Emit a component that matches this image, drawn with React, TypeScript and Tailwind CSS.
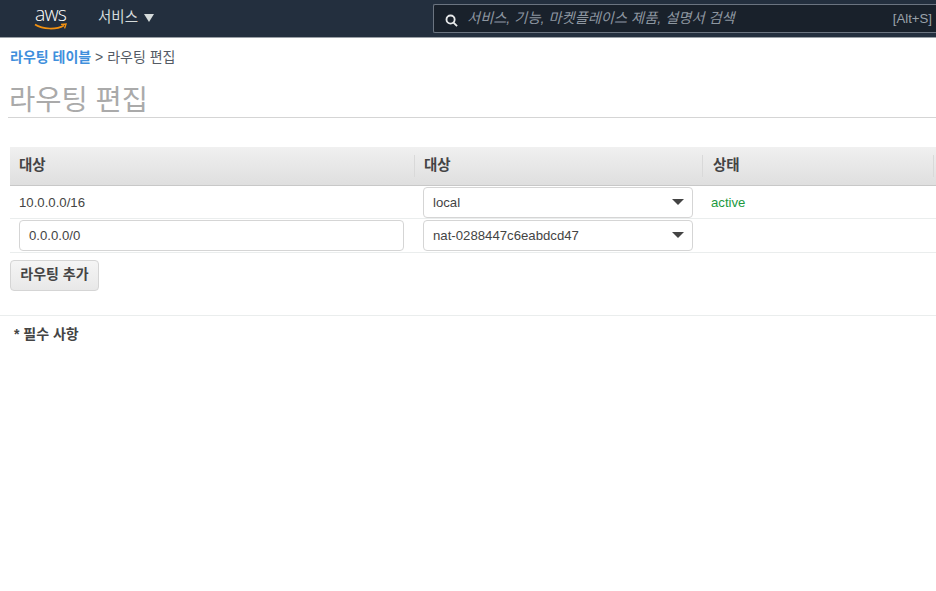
const KR = "font-['Liberation_Sans','Noto_Sans_CJK_KR',sans-serif]";

function Caret() {
  return <span className="ml-auto mr-[8px] h-0 w-0 border-x-[6px] border-t-[6px] border-x-transparent border-t-[#444]" />;
}

function Select({ value }: { value: string }) {
  return (
    <div className="flex h-[31px] w-[270px] items-center rounded-[4px] border border-[#d5d5d5] bg-white pl-[9px] text-[13.2px] text-[#444]">
      <span className="pt-[1px]">{value}</span>
      <Caret />
    </div>
  );
}

function HeadCell({ label, width, pad }: { label: string; width: string; pad: string }) {
  return (
    <div className={`flex h-full items-center ${width}`}>
      <div className={`flex h-[22px] w-full items-center border-r border-[#d9d9d9] text-[14.5px] font-bold text-[#444] ${pad}`}>
        {label}
      </div>
    </div>
  );
}

export default function App() {
  return (
    <div className={`h-[591px] w-[936px] overflow-hidden bg-white ${KR}`}>
      {/* Top nav */}
      <div className="flex h-[38px] items-start border-b border-[#9aa0a6] bg-[#232f3e]">
        <div className="ml-[34px] flex h-[37px] w-[33px] flex-col items-center">
          <span className="mt-[5px] font-['Open_Sans',sans-serif] text-[19.5px] font-light leading-[18px] tracking-[-0.9px] text-white">aws</span>
          <svg width="33" height="8" viewBox="0 0 33 8">
            <path d="M1 1.5C9 6.5 22 7 30 2.5" fill="none" stroke="#f29111" strokeWidth="1.6" />
            <path d="M27 1.4L32 1L30.6 5.4" fill="none" stroke="#f29111" strokeWidth="1.4" />
          </svg>
        </div>
        <div className="ml-[31px] flex h-[36px] items-center text-[14.5px] text-[#d5dbdb]">
          서비스
          <span className="ml-[6px] h-0 w-0 border-x-[5.5px] border-t-[8px] border-x-transparent border-t-[#d5dbdb]" />
        </div>
        <div className="ml-[279px] mt-[4px] flex h-[29px] flex-1 items-center rounded-l-[2px] border border-r-0 border-[#6b7480] bg-[#19212b] pl-[11px] pr-[4px]">
          <svg width="13" height="13" viewBox="0 0 14 14" fill="none" stroke="#e8eaeb" strokeWidth="2" className="mt-[3px]">
            <circle cx="6" cy="6" r="4.4" />
            <path d="M9.2 9.2L13 13" />
          </svg>
          <span className="ml-[9px] text-[14.25px] italic text-[#8d96a0]">서비스, 기능, 마켓플레이스 제품, 설명서 검색</span>
          <span className="ml-auto text-[13.2px] text-[#99a2aa]">[Alt+S]</span>
        </div>
      </div>

      {/* Breadcrumb */}
      <div className="pl-[10px] pt-[10px] text-[14px] leading-[19px] text-[#545b64]">
        <span className="font-bold text-[#3f8fdc]">라우팅 테이블</span> &gt; 라우팅 편집
      </div>

      {/* Title */}
      <div className="ml-[8px] mt-[7px] h-[44px] border-b border-[#d5d5d5] pl-[1px] text-[28.5px] leading-[52px] text-[#aaa]">
        라우팅 편집
      </div>

      {/* Table */}
      <div className="ml-[10px] mt-[29px]">
        <div className="flex h-[39px] items-center border-b border-[#c8c8c8] bg-gradient-to-b from-[#f0f0f0] to-[#dfdfdf]">
          <HeadCell label="대상" width="w-[405px]" pad="pl-[9px]" />
          <HeadCell label="대상" width="w-[288px]" pad="pl-[9px]" />
          <HeadCell label="상태" width="w-[231px]" pad="pl-[10px]" />
        </div>
        <div className="flex h-[33px] items-center border-b border-[#eaeded]">
          <div className="w-[413px] pl-[9px] pt-[1px] text-[13.2px] text-[#444]">10.0.0.0/16</div>
          <Select value="local" />
          <div className="pl-[18px] pt-[1px] text-[13.2px] text-[#1d9a3f]">active</div>
        </div>
        <div className="flex h-[34px] items-center border-b border-[#eaeded] pb-[1px]">
          <div className="w-[413px] pl-[9px]">
            <div className="flex h-[31px] w-[385px] items-center rounded-[4px] border border-[#d5d5d5] pl-[9px] pt-[1px] text-[13.2px] text-[#444]">
              0.0.0.0/0
            </div>
          </div>
          <Select value="nat-0288447c6eabdcd47" />
        </div>
        <div className="mt-[7px] flex h-[31px] w-[89px] items-center justify-center rounded-[4px] border border-[#d5d5d5] bg-gradient-to-b from-[#f5f5f5] to-[#e8e8e8] pb-[3px] text-[14px] font-bold text-[#444]">
          라우팅 추가
        </div>
      </div>

      {/* Footer */}
      <div className="mt-[24px] border-t border-[#eaeded] pl-[14px] pt-[9px] text-[14px] font-bold leading-[18px] text-[#444]">
        * 필수 사항
      </div>
    </div>
  );
}
